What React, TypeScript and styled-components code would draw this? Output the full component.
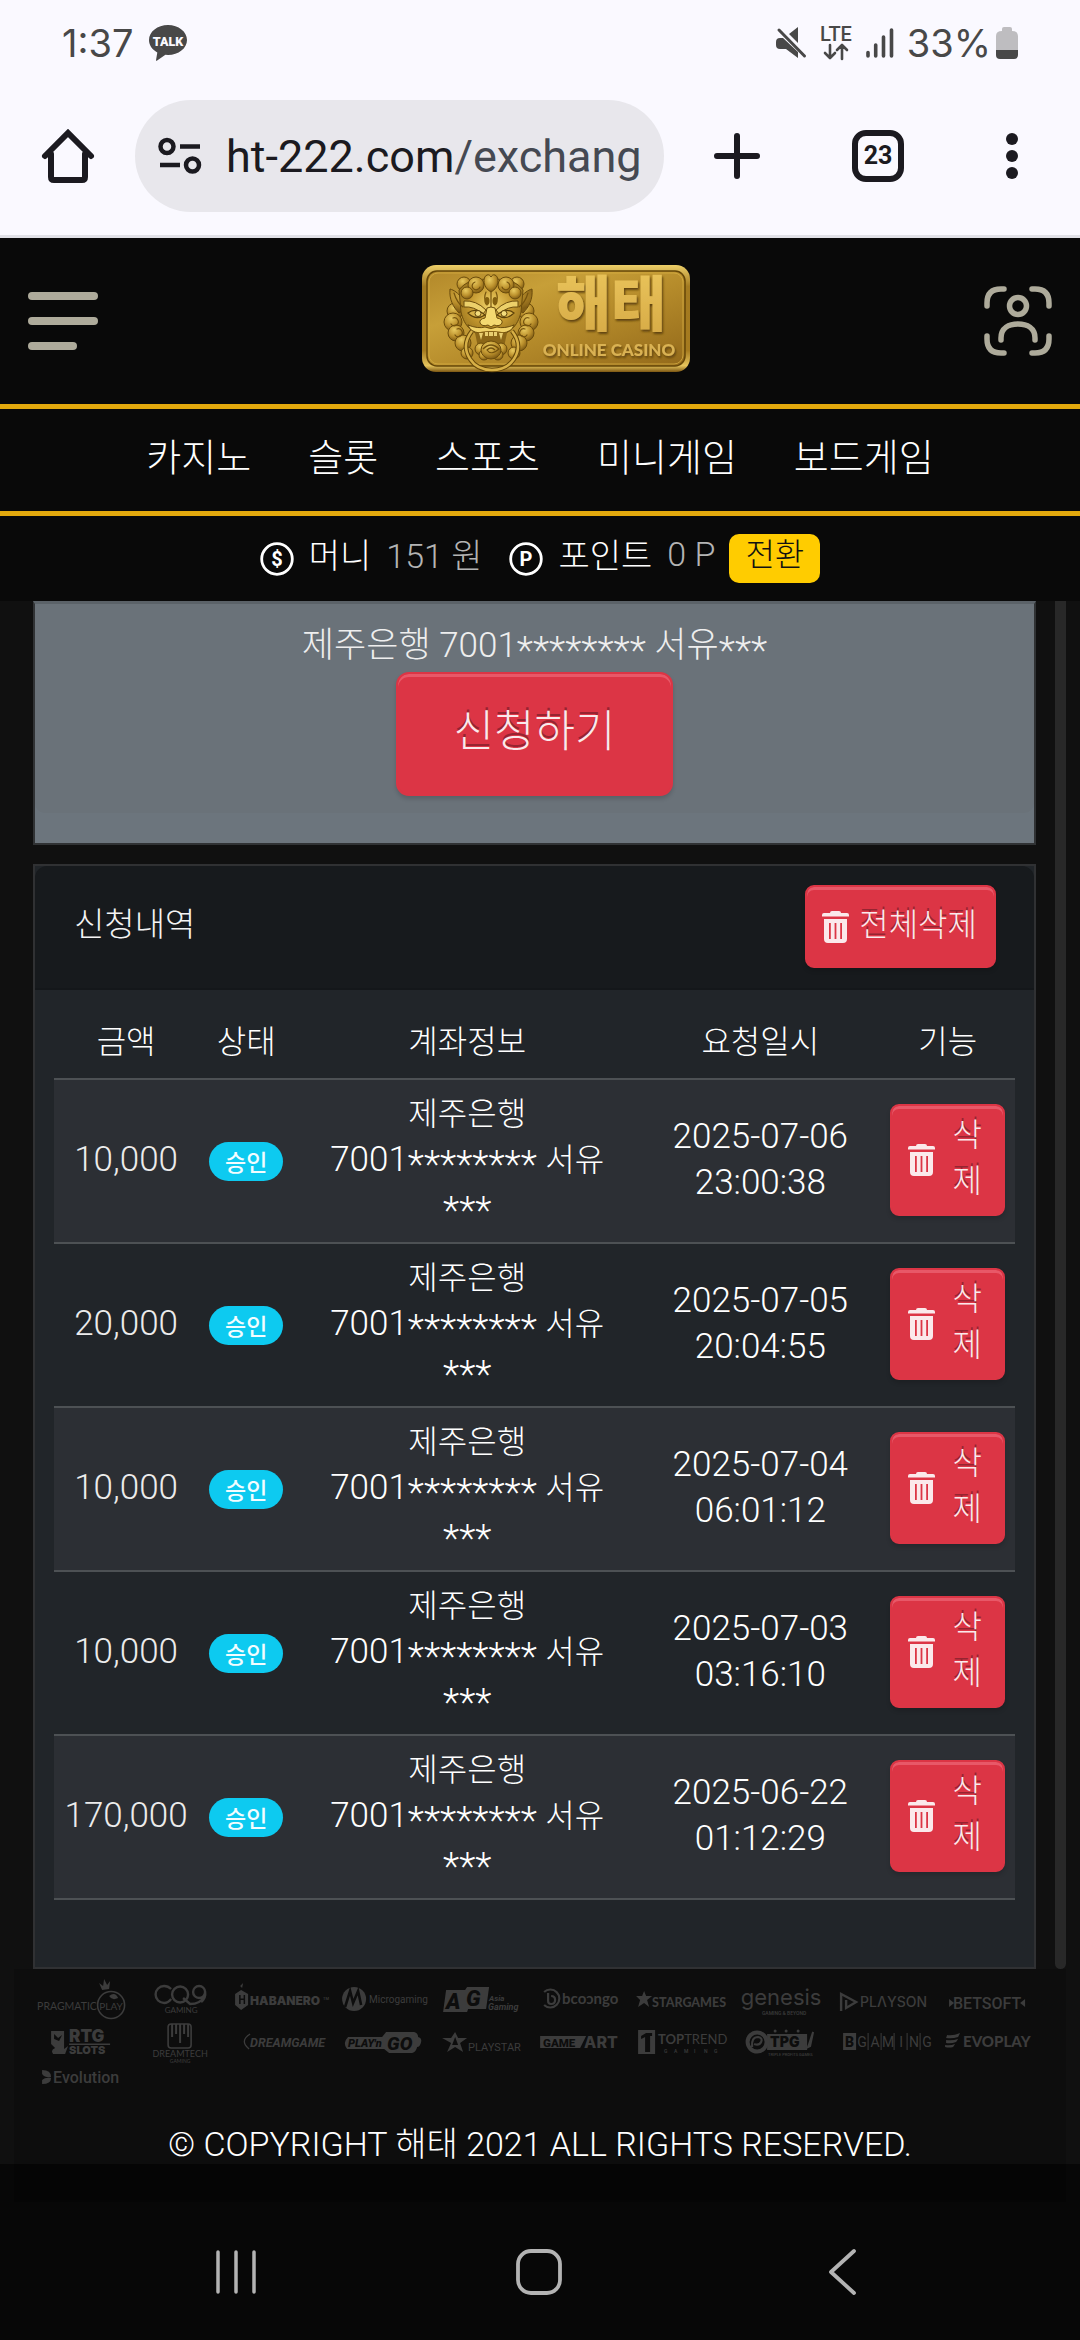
import React from "react";
import styled, { createGlobalStyle } from "styled-components";

const hangul = `"Noto Sans CJK KR", sans-serif`;
const mixed = `Roboto, "Noto Sans CJK KR", sans-serif`;

const GlobalStyle = createGlobalStyle`
  * { box-sizing: border-box; }
  body {
    margin: 0;
    background: #070707;
    font-family: ${mixed};
    font-weight: 300;
  }
  button { font: inherit; color: inherit; border: 0; padding: 0; margin: 0; background: none; cursor: pointer; }
  a { color: inherit; text-decoration: none; }
  svg { display: block; flex: none; overflow: visible; }
`;

const Page = styled.div`
  display: flex;
  flex-direction: column;
  min-height: 100vh;
`;

/* ---------- phone and browser chrome ---------- */

const StatusBar = styled.div`
  display: flex;
  align-items: center;
  justify-content: space-between;
  height: 86px;
  padding: 0 62px;
  background: #faf9ff;
  color: #484848;
  font-family: Inter, sans-serif;
  font-size: 38px;
  font-weight: 400;
`;

const StatusGroup = styled.div<{ $gap: number }>`
  display: flex;
  align-items: center;
  gap: ${(p) => p.$gap}px;
`;

const BrowserBar = styled.div`
  display: flex;
  align-items: center;
  padding: 14px 62px 23px 42px;
  background: #faf9ff;
  border-bottom: 3px solid #e1e1e7;
  color: #1b1a20;
`;

const AddressPill = styled.button`
  display: flex;
  align-items: center;
  gap: 24px;
  flex: 1;
  min-width: 0;
  height: 112px;
  margin: 0 50px 0 41px;
  padding: 0 23px;
  border-radius: 56px;
  background: #e8e7ec;
  font-family: Roboto, sans-serif;
  font-size: 45px;
  font-weight: 400;
  overflow: hidden;
  white-space: nowrap;
`;

const UrlPath = styled.span`
  color: #454952;
`;

const TabCount = styled.button`
  width: 52px;
  height: 52px;
  margin: 0 102px 0 92px;
  border: 6px solid #1b1a20;
  border-radius: 14px;
  font-size: 25px;
  font-weight: 700;
  line-height: 40px;
`;

/* ---------- site header ---------- */

const SiteHeader = styled.header`
  display: flex;
  flex-direction: column;
  background: #090909;
  color: #fff;
`;

const BrandRow = styled.div`
  display: flex;
  align-items: center;
  justify-content: space-between;
  height: 166px;
  padding: 0 28px;
`;

const MenuButton = styled.button`
  display: flex;
  flex-direction: column;
  gap: 17px;
  width: 70px;
`;

const MenuLine = styled.span<{ $short?: boolean }>`
  width: ${(p) => (p.$short ? 49 : 70)}px;
  height: 8px;
  border-radius: 4px;
  background: #aeab9b;
`;

const BrandLink = styled.a`
  padding: 0 0 4px 30px;
`;

const MainNav = styled.nav`
  display: flex;
  align-items: center;
  justify-content: center;
  gap: 57px;
  height: 112px;
  padding-bottom: 12px;
  border-top: 5px solid #e3a90d;
  border-bottom: 5px solid #e3a90d;
  font-family: ${hangul};
  font-size: 38px;
`;

const Wallet = styled.div`
  display: flex;
  align-items: center;
  justify-content: center;
  height: 85px;
  font-size: 34px;
`;

const WalletItem = styled.span`
  display: flex;
  align-items: center;
  gap: 15px;
  margin-right: 27px;
`;

const WalletText = styled.span<{ $muted?: boolean }>`
  padding-bottom: 10px;
  color: ${(p) => (p.$muted ? "#b4b4b4" : "#fff")};
`;

const ConvertButton = styled.button`
  height: 49px;
  margin-left: -13px;
  padding: 0 16px 14px;
  border-radius: 10px;
  background: #fc0;
  color: #111;
  font-family: ${hangul};
  font-size: 32px;
  line-height: 34px;
`;

/* ---------- content ---------- */

const Scroller = styled.main`
  display: flex;
  gap: 19px;
  padding: 0 14px 0 33px;
  background: #101010;
`;

const ScrollThumb = styled.div`
  width: 11px;
  border-radius: 0 0 6px 6px;
  background: #282828;
`;

const Content = styled.div`
  flex: 1;
  min-width: 0;
  display: flex;
  flex-direction: column;
  gap: 19px;
`;

const RequestCard = styled.section`
  border: 2px solid #303234;
  border-top: 3px solid #5b6268;
  background: #6c757d;
  padding-bottom: 30px;
`;

const RequestBody = styled.div`
  display: flex;
  flex-direction: column;
  align-items: center;
  gap: 2px;
  padding: 18px 0 17px;
  border-radius: 0 0 10px 10px;
  background: #6a7279;
  color: #eee;
  font-size: 35px;
  line-height: 48px;
`;

const RedButton = styled.button<{ $kind: "large" | "bar" | "stacked" }>`
  display: flex;
  align-items: center;
  justify-content: center;
  border: 2px solid #dc3545;
  border-radius: ${(p) => (p.$kind === "large" ? 13 : 9)}px;
  background: #dc3545;
  box-shadow: inset 0 3px 0 #e85868, 0 3px 4px rgba(0, 0, 0, 0.15);
  color: #fbe9eb;
  font-family: ${hangul};
  text-shadow: 0 -3px 0 rgba(80, 20, 30, 0.5);
  ${(p) =>
    p.$kind === "large"
      ? "padding: 26px 56px 38px; font-size: 44px; line-height: 56px;"
      : p.$kind === "bar"
      ? "gap: 10px; padding: 12px 17px 11px 15px; font-size: 32px; line-height: 46px;"
      : "gap: 17px; width: 100%; padding: 3px 20px 3px 15px; font-size: 32px; line-height: 46px;"}
`;

const ButtonLabel = styled.span`
  padding-bottom: 10px;
`;

const HistoryCard = styled.section`
  border: 2px solid #303133;
  background: #212529;
`;

const HistoryHeader = styled.div`
  display: flex;
  align-items: center;
  justify-content: space-between;
  padding: 19px 38px 20px 39px;
  border-bottom: 2px solid #14171a;
  border-radius: 12px 12px 0 0;
  background: #171a1d;
  color: #f4f4f4;
`;

const HistoryTitle = styled.h2`
  margin: 0;
  padding-bottom: 10px;
  font-family: ${hangul};
  font-size: 33px;
  font-weight: 300;
  line-height: 46px;
`;

const HistoryBody = styled.div`
  padding: 18px 19px 67px;
`;

const HistoryTable = styled.table`
  width: 100%;
  border-collapse: collapse;
  table-layout: fixed;
  color: #fff;
  text-align: center;
  line-height: 46px;
`;

const Column = styled.col<{ $share: number }>`
  width: ${(p) => p.$share}%;
`;

const HeadCell = styled.th`
  padding: 8px 0 16px;
  border-bottom: 2px solid #4d5154;
  font-family: ${hangul};
  font-size: 32px;
  font-weight: 300;
`;

const Row = styled.tr`
  border-bottom: 2px solid #4d5154;
  &:nth-child(odd) { background: #2c2f34; }
`;

const Cell = styled.td`
  padding: 11px 10px 13px;
  font-size: 35px;
  white-space: nowrap;
`;

const CenterCell = styled(Cell)<{ $muted?: boolean }>`
  padding: 10px 0 12px;
  color: ${(p) => (p.$muted ? "#ececec" : "#fff")};
`;

const Korean = styled.span`
  font-family: ${hangul};
  font-size: 32px;
  line-height: 30px;
`;

const Stars = styled.span`
  font-size: 38px;
  line-height: 20px;
  vertical-align: -7px;
`;

const StatusPill = styled.span`
  display: inline-block;
  padding: 0 16px;
  border-radius: 20px;
  background: #0dcaf0;
  color: #f2fdff;
  font-family: ${hangul};
  font-size: 23px;
  font-weight: 500;
  line-height: 39px;
  vertical-align: middle;
`;

const FooterFrame = styled.div`
  background: #101010;
`;

const Footer = styled.footer`
  margin: 0 14px;
  background: #0d0d0d;
  color: #fff;
`;

const Partners = styled.ul`
  display: grid;
  grid-template-columns: repeat(10, 1fr);
  margin: 0;
  padding: 8px 33px 0 17px;
  list-style: none;
`;

const Copyright = styled.p`
  margin: 0;
  padding-top: 36px;
  font-size: 34px;
  line-height: 40px;
  text-align: center;
  white-space: nowrap;
`;

const SystemNav = styled.div`
  display: flex;
  flex-direction: column;
  flex: 1;
  background: #070707;
`;

const SystemShade = styled.div`
  height: 38px;
  margin: 0 14px;
  background: #050505;
`;

const SystemButtons = styled.div`
  display: flex;
  justify-content: space-between;
  align-items: center;
  flex: 1;
  padding: 2px 224px 0 214px;
`;

/* ---------- icons ---------- */

const TalkIcon = () => (
  <svg width="38" height="36" viewBox="0 0 38 36">
    <path fill="#484848" d="M19 0C8.500 0 0 6.700 0 15c0 5.200 3.300 9.700 8.300 12.400L7 35.300c0 .5.400.6.800.4l8.600-5.900 2.600.2c10.500 0 19-6.700 19-15S29.500 0 19 0z" />
    <text x="19" y="20.500" textAnchor="middle" fontFamily="Roboto, sans-serif" fontWeight="900" fontSize="12.500" fill="#faf9ff">TALK</text>
  </svg>
);

const MuteIcon = () => (
  <svg width="30" height="32" viewBox="0 0 30 32" fill="#484848">
    <path d="M0 15q0-4 4-4h3l15 14v6L10 22H4q-4 0-4-4z" />
    <path d="M13 7 22 0v16z" />
    <path d="M3 3l25.500 26" stroke="#484848" strokeWidth="3" strokeLinecap="round" />
  </svg>
);

const LteIcon = () => (
  <svg width="34" height="36" viewBox="0 0 34 36">
    <text x="17" y="16" textAnchor="middle" fontFamily="Roboto, sans-serif" fontWeight="500" fontSize="20" fill="#484848">LTE</text>
    <path d="M11 20v12M6 28l5 5 5-5M23 34V20M18 25l5-5 5 5" fill="none" stroke="#484848" strokeWidth="2.600" strokeLinecap="round" strokeLinejoin="round" />
  </svg>
);

const SignalIcon = () => (
  <svg width="28" height="30" viewBox="0 0 28 30">
    <path d="M2 24.500v3.500M9.700 17v11M17.500 9v19M25.500 2v26" stroke="#484848" strokeWidth="3.600" strokeLinecap="round" />
  </svg>
);

const BatteryIcon = () => (
  <svg width="22" height="32" viewBox="0 0 22 32">
    <path d="M6 2q0-2 2-2h6q2 0 2 2v2q6 0 6 5v15H0V9q0-5 6-5z" fill="#bebdc0" />
    <path d="M0 23h22v5q0 4-4 4H4q-4 0-4-4z" fill="#484848" />
  </svg>
);

const HomeIcon = () => (
  <svg width="52" height="54" viewBox="0 0 52 54">
    <path d="M9 25v23q0 3 3 3h28q3 0 3-3V25M3 27 26 4l23 23" fill="none" stroke="#1b1a20" strokeWidth="6" strokeLinecap="round" strokeLinejoin="miter" />
  </svg>
);

const TuneIcon = () => (
  <svg width="44" height="38" viewBox="0 0 44 38" fill="none" stroke="#1b1a20" strokeWidth="4.500">
    <circle cx="9" cy="9.500" r="6.500" />
    <circle cx="34.500" cy="28" r="6.500" />
    <path d="M22 9.500h20M2 28h20" />
  </svg>
);

const PlusIcon = () => (
  <svg width="46" height="46" viewBox="0 0 46 46">
    <path d="M23 3v40M3 23h40" stroke="#1b1a20" strokeWidth="6" strokeLinecap="round" />
  </svg>
);

const DotsIcon = () => (
  <svg width="12" height="46" viewBox="0 0 12 46" fill="#1b1a20">
    <circle cx="6" cy="6" r="6" />
    <circle cx="6" cy="23" r="6" />
    <circle cx="6" cy="40" r="6" />
  </svg>
);

const UserIcon = () => (
  <svg width="68" height="70" viewBox="0 0 68 70" fill="none" stroke="#aeab9b" strokeWidth="5.500" strokeLinecap="round">
    <path d="M3 20v-3Q3 3 17 3h3M48 3h3q14 0 14 14v3M65 50v3q0 14-14 14h-3M20 67h-3Q3 67 3 53v-3" />
    <circle cx="34" cy="20" r="8.500" />
    <path d="M17 54v-2c0-10 8-14 17-14s17 4 17 14v2" />
  </svg>
);

const CoinIcon = ({ mark }: { mark: string }) => (
  <svg width="34" height="34" viewBox="0 0 34 34">
    <circle cx="17" cy="17" r="15.300" fill="none" stroke="#fff" strokeWidth="2.800" />
    <text x="17" y="24" textAnchor="middle" fontFamily="Roboto, sans-serif" fontWeight="700" fontSize="20" fill="#fff">{mark}</text>
  </svg>
);

const TrashIcon = () => (
  <svg width="27" height="32" viewBox="0 0 27 32">
    <path fill="#fbe9eb" d="M8 2q0-2 2-2h7q2 0 2 2h6q2 0 2 2v1.500H0V4q0-2 2-2z" />
    <path fill="#fbe9eb" fillRule="evenodd" d="M2 8h23v20q0 4-4 4H6q-4 0-4-4zM7 12v16h1.800V12zM12.600 12v16h1.800V12zM18.200 12v16H20V12z" />
  </svg>
);

const BrandLogo = () => (
  <svg width="268" height="108" viewBox="0 0 268 108" role="img" aria-label="해태 ONLINE CASINO">
    <defs>
      <linearGradient id="plate" x1="0" y1="0" x2="1" y2="1">
        <stop offset="0" stopColor="#b2882a" />
        <stop offset=".3" stopColor="#c79f38" />
        <stop offset=".55" stopColor="#b68c2b" />
        <stop offset="1" stopColor="#93691a" />
      </linearGradient>
      <linearGradient id="rim" x1="0" y1="0" x2="0" y2="1">
        <stop offset="0" stopColor="#edcf69" />
        <stop offset=".2" stopColor="#a37a20" />
        <stop offset=".8" stopColor="#a67b1f" />
        <stop offset=".94" stopColor="#e6c45c" />
        <stop offset="1" stopColor="#7c5612" />
      </linearGradient>
      <linearGradient id="letter" x1="0" y1="0" x2="0" y2="1">
        <stop offset="0" stopColor="#edc95f" />
        <stop offset="1" stopColor="#d5a844" />
      </linearGradient>
      <radialGradient id="face" cx=".5" cy=".45" r=".6">
        <stop offset="0" stopColor="#f2d56b" />
        <stop offset=".55" stopColor="#c4982f" />
        <stop offset="1" stopColor="#94701c" />
      </radialGradient>
      <radialGradient id="curl" cx=".4" cy=".3" r=".7">
        <stop offset="0" stopColor="#e9ca5f" />
        <stop offset=".6" stopColor="#bb902c" />
        <stop offset="1" stopColor="#805c14" />
      </radialGradient>
      <filter id="emboss" x="-10%" y="-10%" width="120%" height="130%">
        <feDropShadow dx="1.200" dy="2" stdDeviation=".8" floodColor="#5f430b" floodOpacity="1" />
      </filter>
    </defs>
    <rect x="0" y="0" width="268" height="107" rx="14" fill="url(#rim)" />
    <rect x="5" y="6" width="258" height="95" rx="10" fill="url(#plate)" stroke="#664708" strokeWidth="1.500" />
    <rect x="7" y="8" width="254" height="91" rx="9" fill="none" stroke="#d5ad43" strokeWidth=".8" />
    <g fill="url(#curl)" stroke="#6b4c0c" strokeWidth="1">
      {[[33, 46, 8], [31, 57, 9], [34, 68, 8], [41, 78, 8], [45, 88, 6], [104, 46, 8], [107, 57, 9], [104, 68, 8], [97, 78, 8], [92, 88, 6], [42, 19, 7], [95, 19, 7]].map(([x, y, r], i) => (
        <circle key={i} cx={x} cy={y} r={r} />
      ))}
      <path d="M28 24c4 1 8 4 12 9l5 10-8 5c-6-6-10-14-9-24zM110 24c-4 1-8 4-12 9l-5 10 8 5c6-6 10-14 9-24z" />
      <path d="M37 25c6-8 14-11 32-11s26 3 32 11l-2 22c-3 14-12 24-30 24s-27-10-30-24z" fill="url(#face)" />
      <circle cx="54" cy="20" r="8" />
      <circle cx="84" cy="20" r="8" />
      <circle cx="45" cy="28" r="6" />
      <circle cx="93" cy="28" r="6" />
      <path d="M69 27C61 23 60 12 65 10c2-.7 3 .5 4 2 1-1.500 2-2.700 4-2 5 2 4 13-4 17z" />
    </g>
    <g fill="none" stroke="#75530e" strokeWidth="1.200" strokeLinecap="round">
      <path d="M58 22a4 4 0 1 1-5-5M80 22a4 4 0 1 0 5-5M31 53a4 4 0 1 1-2 6M107 53a4 4 0 1 0 2 6M35 64a4 4 0 1 1-2 6M103 64a4 4 0 1 0 2 6" />
      <path d="M69 26v17M64 27q-3 7 1 13M74 27q3 7-1 13M32 28q3 10 9 14M106 28q-3 10-9 14M46 60q6 8 12 9M92 60q-6 8-12 9" />
    </g>
    <path d="M42 36q12-1 22 9l-3 4q-9-8-19-7zM96 36q-12-1-22 9l3 4q9-8 19-7z" fill="#ecd06a" stroke="#6b4c0c" strokeWidth="1" />
    <path d="M46 48q8-6 17 2-9 6-17-2zM92 48q-8-6-17 2 9 6 17-2z" fill="#d9b349" stroke="#5d420a" strokeWidth="1.200" />
    <circle cx="56" cy="48.500" r="3" fill="#f3dc7c" stroke="#5d420a" />
    <circle cx="82" cy="48.500" r="3" fill="#f3dc7c" stroke="#5d420a" />
    <ellipse cx="65" cy="36" rx="2.500" ry="4" fill="#84600f" />
    <ellipse cx="73" cy="36" rx="2.500" ry="4" fill="#84600f" />
    <path d="M65 43q4-2 8 0l2 10q6 1 5 5-2 4-8 2l-3 2-3-2q-6 2-8-2-1-4 5-5z" fill="#f4d971" stroke="#6b4c0c" strokeWidth="1" />
    <path d="M46 60q10 4 17 2 6 3 12 0 7 2 17-2-2 7-12 8-11-3-22 0-10-1-12-8z" fill="#f0d269" stroke="#6b4c0c" strokeWidth="1" />
    <path d="M53 68q16-4 32 0l-3 14q-13 7-26 0z" fill="#8b6617" />
    <path d="M57 68l2 7 2-7zM81 68l-2 7-2-7zM63 67h3v4h-3zM67 67h4v4h-4zM72 67h3v4h-3z" fill="#e8ce70" />
    <g fill="url(#curl)" stroke="#6b4c0c" strokeWidth="1">
      <circle cx="59" cy="84" r="6" />
      <circle cx="79" cy="84" r="6" />
      <circle cx="62" cy="90" r="5" />
      <circle cx="76" cy="90" r="5" />
      <ellipse cx="69" cy="85" rx="10" ry="9" />
    </g>
    <path d="M61 84q8-8 16 0-8 7-12 1 4-4 8 0" fill="none" stroke="#73520e" strokeWidth="1.200" />
    <path d="M50 66q-11 14-2 28 7 11 22 11t22-11q9-14-2-28" fill="none" stroke="#67490b" strokeWidth="4.500" />
    <path d="M50 66q-11 14-2 28 7 11 22 11t22-11q9-14-2-28" fill="none" stroke="#d7b047" strokeWidth="2.500" />
    <g textAnchor="middle" filter="url(#emboss)">
      <text x="189" y="61" fontFamily='"Noto Sans CJK KR", sans-serif' fontSize="60" fontWeight="900" fill="url(#letter)">해태</text>
      <text x="187" y="91" fontFamily="Lato, sans-serif" fontSize="17" fontWeight="900" fill="#dab252">ONLINE CASINO</text>
    </g>
  </svg>
);

/* ---------- partner marks ---------- */

const ink = "#3c3c3c";

const Mark = ({ h, label, children }: { h: number; label: string; children: React.ReactNode }) => (
  <svg width="100%" height={h} viewBox={`0 0 100 ${h}`} role="img" aria-label={label} fill={ink} fontFamily="Roboto, sans-serif" fontWeight="500">
    {children}
  </svg>
);

const partners: { label: string; h: number; art: React.ReactNode }[] = [
  { label: "Pragmatic Play", h: 44, art: <>
    <text x="6" y="33" fontSize="10.500" fontFamily="Lato, sans-serif" fontWeight="400">PRAGMATIC</text>
    <circle cx="80" cy="28" r="13.500" fill="none" stroke={ink} strokeWidth="1.600" />
    <text x="80" y="33" fontSize="10" textAnchor="middle" fontFamily="Lato, sans-serif" fontWeight="400">PLAY</text>
    <path d="M71 13l-3-7 4 3 1-7 3 6 3-4-1 8zM78 19q6-5 9 2-6 3-9-2z" />
  </> },
  { label: "CQ9 Gaming", h: 44, art: <>
    <g fill="none" stroke={ink} strokeWidth="2.400">
      <path d="M40 12q-3-3-7-3a8 8 0 1 0 0 17q4 0 7-4" />
      <circle cx="49" cy="17.500" r="8" />
      <path d="M52 21l7 6q10 0 14-7M74 15a6 6 0 1 1-12 0 6 6 0 1 1 12 0q1 6-4 10" />
    </g>
    <text x="50" y="36" fontSize="8" textAnchor="middle" fontFamily="Lato, sans-serif" fontWeight="400">GAMING</text>
  </> },
  { label: "Habanero", h: 44, art: <>
    <path fillRule="evenodd" d="M4 17l6-4 7 4v11l-7 5-6-5zM8 18v9h1.500v-4h3v4H14v-9h-1.500v3.500h-3V18zM9 9l3-3-1 5z" />
    <text x="19" y="28" fontSize="12" fontFamily="Inter, sans-serif" fontWeight="900">HABANERO</text>
    <text x="92" y="23" fontSize="4">TM</text>
  </> },
  { label: "Microgaming", h: 44, art: <>
    <circle cx="22" cy="22" r="12" />
    <path d="M13 30l5-16 3 12 5-12 3 14" fill="none" stroke="#0d0d0d" strokeWidth="2.600" />
    <text x="37" y="26" fontSize="10" fontWeight="400">Microgaming</text>
  </> },
  { label: "Asia Gaming", h: 44, art: <>
    <path d="M14 13h19l2-3h22l-3 22H36l-1 3H11z" />
    <text x="14" y="32" fontSize="22" fontWeight="900" fontStyle="italic" fill="#0d0d0d">A</text>
    <text x="34" y="29" fontSize="22" fontWeight="900" fontStyle="italic" fill="#0d0d0d">G</text>
    <text x="57" y="24" fontSize="8" fontWeight="700" fontStyle="italic">Asia</text>
    <text x="56" y="33" fontSize="9" fontWeight="700" fontStyle="italic">Gaming</text>
  </> },
  { label: "Booongo", h: 44, art: <>
    <path d="M12 15a9 9 0 1 1 0 13M16 16v8q0 3 3 3 4 0 4-4t-4-4" fill="none" stroke={ink} strokeWidth="2.200" />
    <text x="30" y="27" fontSize="15" fontWeight="700" fontFamily="Lato, sans-serif">bcoɔngo</text>
  </> },
  { label: "Stargames", h: 44, art: <>
    <path d="M12 14l2 5h6l-5 4 2 7-5-4-6 4 2-7-4-4h6z" />
    <text x="20" y="30" fontSize="12.500" fontFamily="Lato, sans-serif" fontWeight="900">STARGAMES</text>
  </> },
  { label: "Genesis", h: 44, art: <>
    <text x="49" y="28" fontSize="22" textAnchor="middle" fontFamily="Inter, sans-serif" fontWeight="400">genesis</text>
    <text x="52" y="38" fontSize="5" textAnchor="middle">GAMING &amp; BEYOND</text>
  </> },
  { label: "Playson", h: 44, art: <>
    <path d="M8 34V17l15 8-10 6v-8" fill="none" stroke={ink} strokeWidth="2.400" />
    <text x="27" y="30" fontSize="14" fontFamily="Inter, sans-serif" fontWeight="500">PLΛYSON</text>
  </> },
  { label: "Betsoft", h: 44, art: <>
    <path d="M16 22l5 4-5 4zM92 22l-5 4 5 4z" />
    <text x="54" y="32" fontSize="16" textAnchor="middle" fontWeight="500" fontFamily='"Liberation Sans Narrow", Roboto, sans-serif'>BETSOFT</text>
  </> },
  { label: "RTG Slots", h: 44, art: <>
    <path fillRule="evenodd" d="M20 10h13v18l4-3-3 8H22q-3-4 2-6l-4-4zM23 13l4 4 4-3-3 6-5-2z" />
    <text x="38" y="21" fontSize="17" fontFamily="Inter, sans-serif" fontWeight="900">RTG</text>
    <path d="M38 22.500h41v1.500H38z" />
    <text x="38" y="33" fontSize="11" fontFamily="Inter, sans-serif" fontWeight="900">SLOTS</text>
  </> },
  { label: "Dreamtech Gaming", h: 44, art: <>
    <rect x="37" y="3" width="23" height="24" rx="3" fill="none" stroke={ink} strokeWidth="1.600" />
    <path d="M41 3v13M45 3v10M49 3v19M53 3v10M57 3v13" stroke={ink} strokeWidth="2" />
    <text x="49" y="36" fontSize="9" textAnchor="middle" fontFamily="Lato, sans-serif" fontWeight="400">DREAMTECH</text>
    <text x="49" y="42" fontSize="5" textAnchor="middle" fontFamily="Lato, sans-serif">GAMING</text>
  </> },
  { label: "Dreamgame", h: 44, art: <>
    <path d="M19 13q-11 7-1 15" fill="none" stroke={ink} strokeWidth="1.300" />
    <text x="19" y="26" fontSize="12.500" fontWeight="700" fontStyle="italic">DREAMGAME</text>
  </> },
  { label: "Play'n GO", h: 44, art: <>
    <path d="M16 16h34l4-5h28q4 1 4 5 4 1 3 5-1 5-4 5-1 5-5 6H57l-5-4H15q-5-6 1-12z" />
    <text x="16" y="26" fontSize="11" fontWeight="900" fontStyle="italic" fill="#0d0d0d">PLAY'n</text>
    <text x="55" y="29" fontSize="19" fontWeight="900" fontStyle="italic" fill="#0d0d0d">GO</text>
  </> },
  { label: "Playstar", h: 44, art: <>
    <path d="M10 17h9l4-6 3 6h9l-7 5 3 9-8-5-8 5 4-9z" />
    <path d="M20 24l3-8 3 8z" fill="#0d0d0d" />
    <text x="36" y="30" fontSize="11" fontWeight="400">PLAYSTAR</text>
  </> },
  { label: "GameArt", h: 44, art: <>
    <path d="M8 15h46l-6 12H8z" />
    <text x="11" y="25.500" fontSize="11.500" fontWeight="900" fill="#0d0d0d">GAME</text>
    <text x="52" y="27" fontSize="16" fontFamily="Inter, sans-serif" fontWeight="800">ART</text>
  </> },
  { label: "TopTrend Gaming", h: 44, art: <>
    <path fillRule="evenodd" d="M6 9h17v24H6zM9 15l5-3h6v3h-2v16h-5V16l-4 2z" />
    <text x="26" y="23" fontSize="13" fontFamily="Lato, sans-serif" fontWeight="700">TOP<tspan fontWeight="400">TREND</tspan></text>
    {["G", "A", "M", "I", "N", "G"].map((c, i) => <text key={i} x={32 + i * 10} y="32" fontSize="5">{c}</text>)}
  </> },
  { label: "Triple Profits Games", h: 44, art: <>
    <circle cx="25" cy="21" r="9.500" fill="none" stroke={ink} strokeWidth="4" />
    <path d="M20 26q-1-10 6-10 5 1 3 5t-7 2" fill="none" stroke={ink} strokeWidth="2.200" />
    <path d="M36 14h38v14H36zM76 26l5-15-3 14z" stroke={ink} strokeWidth="2" />
    <text x="38" y="26" fontSize="14" fontFamily="Inter, sans-serif" fontWeight="900" fill="#0d0d0d">TPG</text>
    <text x="36" y="34.500" fontSize="4">TRIPLE PROFITS GAMES</text>
    <circle cx="43" cy="10" r="1.500" /><circle cx="54" cy="10" r="1.500" /><circle cx="66" cy="10" r="1.500" />
  </> },
  { label: "BGaming", h: 44, art: <>
    <rect x="10" y="12" width="13" height="17" />
    <text x="16.500" y="25.500" fontSize="14" textAnchor="middle" fontWeight="900" fill="#0d0d0d">B</text>
    {["G", "A", "M", "I", "N", "G"].map((c, i) => <text key={i} x={29 + i * 13} y="26" fontSize="14" textAnchor="middle" fontWeight="400">{c}</text>)}
    <path d="M35 12v17M48 12v17M61 12v17M74 12v17M87 12v17" stroke={ink} />
  </> },
  { label: "Evoplay", h: 44, art: <>
    <path d="M14 14q6 1 13-2l-2 4q-6 2-12 1zM13 19q6 1 12-1l-2 3q-5 2-10 1zM12 24q5 1 10-1l-2 3q-4 1-8 0z" />
    <text x="30" y="26" fontSize="15" fontFamily="Lato, sans-serif" fontWeight="900">EVOPLAY</text>
  </> },
  { label: "Evolution", h: 23, art: <>
    <path d="M11 5q9 0 9 7-6 1-9-3zM11 19q9 0 9-6-6-1-9 2z" />
    <text x="22" y="18" fontSize="16" fontWeight="500">Evolution</text>
  </> },
];

/* ---------- data ---------- */

const requests = [
  { amount: "10,000", date: "2025-07-06", time: "23:00:38" },
  { amount: "20,000", date: "2025-07-05", time: "20:04:55" },
  { amount: "10,000", date: "2025-07-04", time: "06:01:12" },
  { amount: "10,000", date: "2025-07-03", time: "03:16:10" },
  { amount: "170,000", date: "2025-06-22", time: "01:12:29" },
];

export default function App() {
  return (
    <Page>
      <GlobalStyle />
      <StatusBar>
        <StatusGroup $gap={16}>1:37<TalkIcon /></StatusGroup>
        <StatusGroup $gap={13}>
          <MuteIcon /><LteIcon /><SignalIcon />
          <StatusGroup $gap={5}>33%<BatteryIcon /></StatusGroup>
        </StatusGroup>
      </StatusBar>
      <BrowserBar>
        <button aria-label="Home"><HomeIcon /></button>
        <AddressPill>
          <TuneIcon />
          <span>ht-222.com<UrlPath>/exchang</UrlPath></span>
        </AddressPill>
        <button aria-label="New tab"><PlusIcon /></button>
        <TabCount>23</TabCount>
        <button aria-label="More"><DotsIcon /></button>
      </BrowserBar>

      <SiteHeader>
        <BrandRow>
          <MenuButton aria-label="메뉴"><MenuLine /><MenuLine /><MenuLine $short /></MenuButton>
          <BrandLink href="#"><BrandLogo /></BrandLink>
          <button aria-label="내 정보"><UserIcon /></button>
        </BrandRow>
        <MainNav>
          {["카지노", "슬롯", "스포츠", "미니게임", "보드게임"].map((name) => <a key={name} href="#">{name}</a>)}
        </MainNav>
        <Wallet>
          <WalletItem><CoinIcon mark="$" /><WalletText>머니</WalletText><WalletText $muted>151 원</WalletText></WalletItem>
          <WalletItem><CoinIcon mark="P" /><WalletText>포인트</WalletText><WalletText $muted>0 P</WalletText></WalletItem>
          <ConvertButton>전환</ConvertButton>
        </Wallet>
      </SiteHeader>

      <Scroller>
        <Content>
          <RequestCard>
            <RequestBody>
              <span>제주은행 7001<Stars>********</Stars> 서유<Stars>***</Stars></span>
              <RedButton $kind="large">신청하기</RedButton>
            </RequestBody>
          </RequestCard>
          <HistoryCard>
            <HistoryHeader>
              <HistoryTitle>신청내역</HistoryTitle>
              <RedButton $kind="bar"><TrashIcon /><ButtonLabel>전체삭제</ButtonLabel></RedButton>
            </HistoryHeader>
            <HistoryBody>
              <HistoryTable>
                <colgroup>
                  <Column $share={15} /><Column $share={10} /><Column $share={36} /><Column $share={25} /><Column $share={14} />
                </colgroup>
                <thead>
                  <tr>{["금액", "상태", "계좌정보", "요청일시", "기능"].map((h) => <HeadCell key={h} scope="col">{h}</HeadCell>)}</tr>
                </thead>
                <tbody>
                  {requests.map((r) => (
                    <Row key={r.date}>
                      <CenterCell $muted>{r.amount}</CenterCell>
                      <Cell><StatusPill>승인</StatusPill></Cell>
                      <Cell><Korean>제주은행</Korean><br />7001<Stars>********</Stars> <Korean>서유</Korean><br /><Stars>***</Stars></Cell>
                      <CenterCell>{r.date}<br />{r.time}</CenterCell>
                      <Cell><RedButton $kind="stacked"><TrashIcon /><ButtonLabel>삭<br />제</ButtonLabel></RedButton></Cell>
                    </Row>
                  ))}
                </tbody>
              </HistoryTable>
            </HistoryBody>
          </HistoryCard>
        </Content>
        <ScrollThumb />
      </Scroller>

      <FooterFrame>
        <Footer>
          <Partners>
            {partners.map((p) => <li key={p.label}><Mark h={p.h} label={p.label}>{p.art}</Mark></li>)}
          </Partners>
          <Copyright>© COPYRIGHT 해태 2021 ALL RIGHTS RESERVED.</Copyright>
        </Footer>
      </FooterFrame>

      <SystemNav>
        <SystemShade />
        <SystemButtons>
          <button aria-label="Recent apps">
            <svg width="44" height="44" viewBox="0 0 44 44"><path d="M4 2v40M22 2v40M40 2v40" stroke="#b3b3b3" strokeWidth="3.500" strokeLinecap="round" /></svg>
          </button>
          <button aria-label="Home screen">
            <svg width="46" height="46" viewBox="0 0 46 46"><rect x="2" y="2" width="42" height="42" rx="13" fill="none" stroke="#b3b3b3" strokeWidth="3.800" /></svg>
          </button>
          <button aria-label="Back">
            <svg width="36" height="46" viewBox="0 0 36 46"><path d="M34 2 11 23l23 21" fill="none" stroke="#b3b3b3" strokeWidth="3.800" strokeLinecap="round" strokeLinejoin="round" /></svg>
          </button>
        </SystemButtons>
      </SystemNav>
    </Page>
  );
}
